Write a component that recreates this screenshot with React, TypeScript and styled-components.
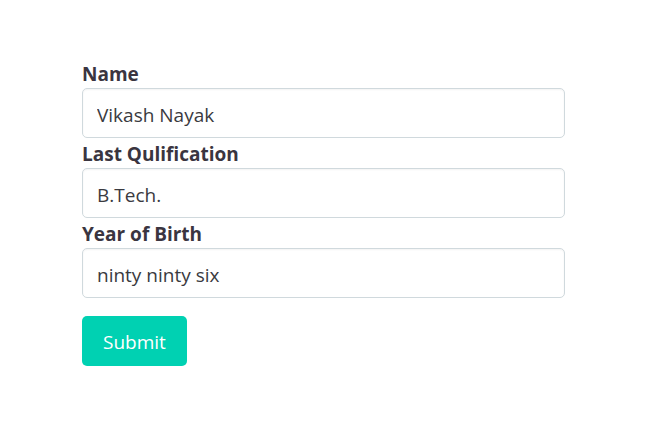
import React, { useState } from 'react';
import styled, { createGlobalStyle } from 'styled-components';

const GlobalStyle = createGlobalStyle`
  *, *::before, *::after { box-sizing: border-box; }
  body {
    margin: 0;
    background: #fff;
    color: #3a3540;
    font-family: "Segoe UI", "Open Sans", "Noto Sans", sans-serif;
  }
`;

const Form = styled.form`
  padding: 60px 82px 56px;
`;

const Field = styled.div`
  display: flex;
  flex-direction: column;
`;

const Label = styled.label`
  font-size: 19px;
  line-height: 28px;
  font-weight: 700;
`;

const TextInput = styled.input`
  width: 100%;
  height: 50px;
  margin: 0 0 2px;
  padding: 4px 14px 0;
  border: 1px solid #d0d9dd;
  border-radius: 5px;
  background: #fff;
  box-shadow: inset 0 1px 2px rgba(10, 10, 10, 0.05);
  color: #3a3a40;
  font-family: inherit;
  font-size: 19px;
  outline: none;
  &:focus { border-color: #00d1b2; }
`;

const SubmitButton = styled.button`
  height: 50px;
  margin-top: 16px;
  padding: 2px 21px 0;
  border: 0;
  border-radius: 5px;
  background: #00d1b2;
  color: #fff;
  font-family: inherit;
  font-size: 19px;
  cursor: pointer;
`;

const fields = [
  { id: 'name', label: 'Name', value: 'Vikash Nayak' },
  { id: 'qualification', label: 'Last Qulification', value: 'B.Tech.' },
  { id: 'birth', label: 'Year of Birth', value: 'ninty ninty six' },
];

export default function App() {
  const [values, setValues] = useState<Record<string, string>>(
    Object.fromEntries(fields.map((f) => [f.id, f.value])),
  );
  return (
    <>
      <GlobalStyle />
      <Form onSubmit={(e) => e.preventDefault()}>
        {fields.map((f) => (
          <Field key={f.id}>
            <Label htmlFor={f.id}>{f.label}</Label>
            <TextInput
              id={f.id}
              type="text"
              value={values[f.id]}
              onChange={(e) => setValues({ ...values, [f.id]: e.target.value })}
            />
          </Field>
        ))}
        <SubmitButton type="submit">Submit</SubmitButton>
      </Form>
    </>
  );
}
